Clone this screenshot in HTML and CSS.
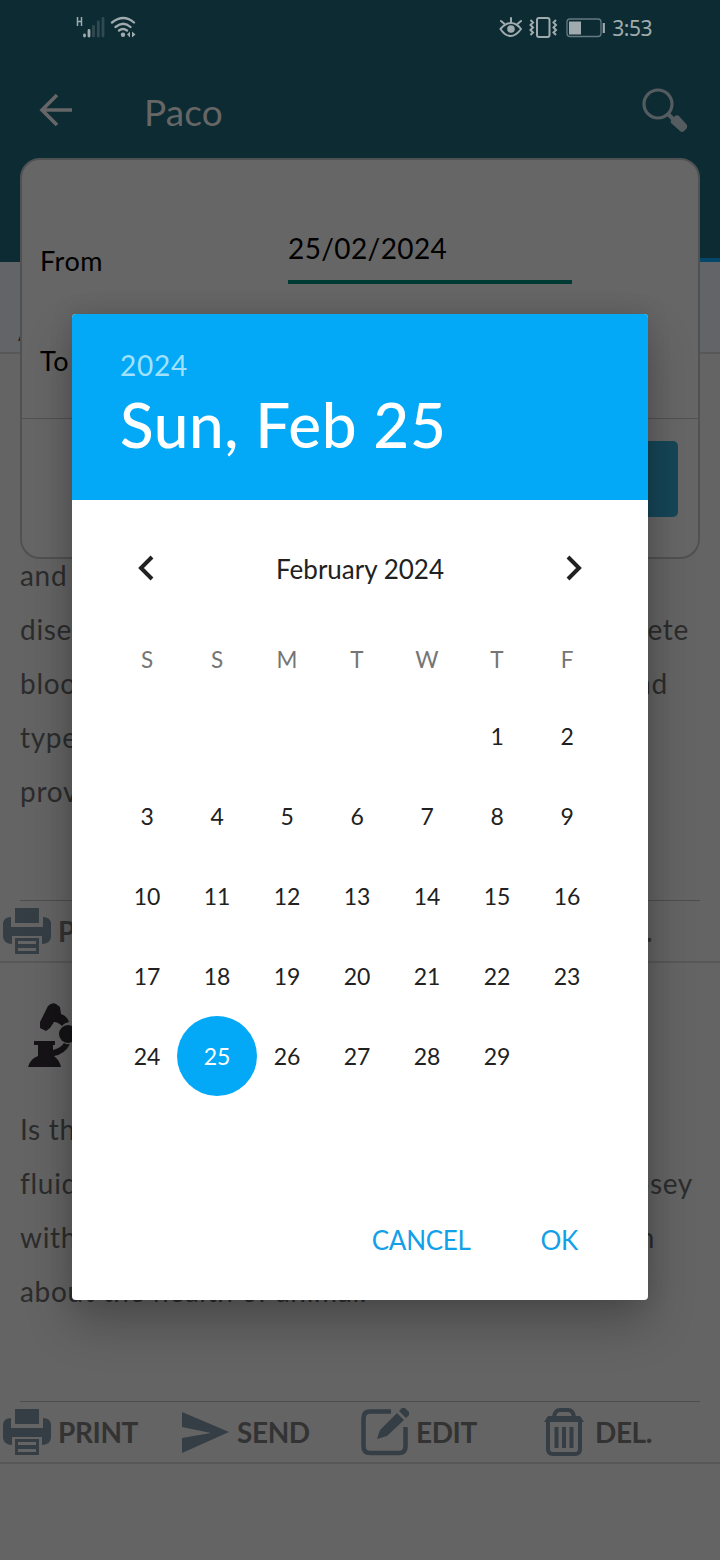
FILE: index.html
```html
<!DOCTYPE html>
<html lang="en">
<head>
    <meta charset="UTF-8">
    <meta name="viewport" content="width=device-width, initial-scale=1.0">
    <title>Paco</title>
    <link rel="stylesheet" href="styles.css">
</head>
<body>
    <!-- shared icons -->
    <svg class="sprite" width="0" height="0">
        <symbol id="print" viewBox="0 0 48 48">
            <path d="M12 1h24v15H12zM0 16q1-6 8-6v10h32V10q7 0 8 6v14q-1 7-9 7v-8H9v8q-8 0-9-7z"/>
            <path fill-rule="evenodd" d="M12 31h24v16H12zM15 34v3h18v-3zM15 41v3h18v-3z"/>
        </symbol>
        <symbol id="send" viewBox="0 0 48 48">
            <path d="M0 4l47 20L0 45V30l29-5L0 19z"/>
        </symbol>
        <symbol id="edit" viewBox="0 0 48 48">
            <path d="M30 3.500H9q-6.500 0-6.500 7v28q0 6.500 6.500 6.500h29q6.500 0 6.500-6.500V19" fill="none" stroke="currentColor" stroke-width="4.500"/>
            <path d="M16 31l3-9L36 5l7 7-17 16zM38 3l3-3h3l4 4v3l-3 3z"/>
        </symbol>
        <symbol id="trash" viewBox="0 0 48 48">
            <path d="M14 9q1-7 6-7h8q5 0 6 7M8 13v28q0 5 5 5h22q5 0 5-5V13" fill="none" stroke="currentColor" stroke-width="4"/>
            <path d="M8 8h32l4 6H4z"/>
            <path d="M16.500 19v21M24 19v21M31.500 19v21" fill="none" stroke="currentColor" stroke-width="4"/>
        </symbol>
    </svg>

    <div class="screen">
        <header class="app-header">
            <div class="status-bar">
                <div class="status-left">
                    <svg width="60" height="24" viewBox="0 0 60 24">
                        <path d="M1.500 1v9M5.500 1v9M1.500 5.500h4" stroke="#9fabae" stroke-width="1.500" fill="none"/>
                        <g stroke-width="2.800" stroke-linecap="round">
                            <path d="M8.500 19v1M13 14.500v5.500" stroke="#9fabae"/>
                            <path d="M17.500 10.500v9.500M22.300 6v14M27 2.500v17.500" stroke="#314a51"/>
                        </g>
                        <g fill="none" stroke="#9fabae" stroke-width="2.300" stroke-linecap="round">
                            <path d="M36 6.500q11.500-9 22 0M39.500 11q8-6.500 15 0M43 14.500q4-3 8 0"/>
                        </g>
                        <circle cx="47" cy="18.800" r="2.200" fill="#9fabae"/>
                        <path d="M51 18.500l3-3v6zM59.500 18.500l-3.500-3v6z" fill="#9fabae"/>
                    </svg>
                </div>
                <div class="status-right">
                    <svg width="106" height="24" viewBox="0 0 106 24" fill="none" stroke="#9fabae" stroke-width="2">
                        <path d="M1.500 13q5-6 10.500-6t10 6q-5 7-10.500 7T1.500 13zM12 6V2M5 7.500L2 5M19 7.500L22 5" stroke-linecap="round"/>
                        <circle cx="12" cy="13" r="3.800" fill="#9fabae" stroke="none"/>
                        <rect x="38" y="2" width="12.500" height="19" rx="2"/>
                        <path d="M31.500 4l2.500 2.500-2.500 2.500 2.500 2.500-2.500 2.500 2.500 2.500-2.500 2.500M57 4l-2.500 2.500 2.500 2.500-2.500 2.500 2.500 2.500-2.500 2.500 2.500 2.500"/>
                        <rect x="68" y="3" width="34" height="17.500" rx="3" stroke="#657a7f" stroke-width="1.300"/>
                        <path d="M70 5.500h12v13H70z" fill="#9fabae" stroke="none"/>
                        <path d="M104.800 7v10" stroke-width="2.200"/>
                    </svg>
                    <span class="clock">3:53</span>
                </div>
            </div>
            <div class="toolbar">
                <svg class="back" width="34" height="34" viewBox="0 0 34 34" fill="none" stroke="#666" stroke-width="3.600">
                    <path d="M33 17H4M18 2L3 17l15 15"/>
                </svg>
                <h1>Paco</h1>
                <svg class="search" width="46" height="46" viewBox="0 0 46 46">
                    <circle cx="17" cy="17" r="14" fill="none" stroke="#555c60" stroke-width="3.200"/>
                    <path d="M27 27l5 5" stroke="#555c60" stroke-width="4"/>
                    <path d="M31 32l3-3q2-1.500 4 0l8 9q1 2 0 3l-3 3q-2 2-4 0l-9-8q-1-2 1-4z" fill="#555c60"/>
                </svg>
            </div>
        </header>

        <div class="tabs"><span>All</span></div>

        <article class="record first">
            <div class="text">
                <p><span>and</span></p>
                <p><span>disease</span><span class="end">complete</span></p>
                <p><span>blood</span><span class="end e2">and</span></p>
                <p><span>type</span></p>
                <p><span>provide</span></p>
            </div>
            <div class="actions">
                <div class="action"><svg><use href="#print"/></svg>PRINT</div>
                <div class="action"><svg><use href="#send"/></svg>SEND</div>
                <div class="action"><svg><use href="#edit"/></svg>EDIT</div>
                <div class="action"><svg><use href="#trash"/></svg>DEL.</div>
            </div>
        </article>

        <article class="record">
            <svg class="microscope" width="54" height="64" viewBox="0 0 54 64" fill="#151316">
                <path d="M20 3q4-4 8-2l4 3 1 7q6 2 8 8-5 1-7 4-4-4-8-4l-4 6-4 3-6-3v-6z"/>
                <circle cx="40" cy="31" r="9"/>
                <path d="M6 38h21v4h-2v5q8-2 11-7 3 2 6 1-5 10-16 12 6 5 7 11H0q2-8 10-11V42H6z"/>
            </svg>
            <div class="text">
                <p><span>Is the</span></p>
                <p><span>fluid</span><span class="end e3">Dempsey</span></p>
                <p><span>with</span><span class="end e4">in</span></p>
                <p><span>about the health of animal.</span></p>
            </div>
            <div class="actions">
                <div class="action"><svg><use href="#print"/></svg>PRINT</div>
                <div class="action"><svg><use href="#send"/></svg>SEND</div>
                <div class="action"><svg><use href="#edit"/></svg>EDIT</div>
                <div class="action"><svg><use href="#trash"/></svg>DEL.</div>
            </div>
        </article>

        <!-- date filter -->
        <section class="filter">
            <div class="field"><label>From</label><div class="input">25/02/2024</div></div>
            <div class="field to"><label>To</label></div>
            <div class="filter-footer"><div class="apply"></div></div>
        </section>

        <!-- date picker dialog -->
        <section class="picker">
            <div class="picker-header">
                <div class="year">2024</div>
                <div class="date">Sun, Feb 25</div>
            </div>
            <div class="month">
                <svg width="16" height="26" viewBox="0 0 16 26"><path d="M14 2L3 13l11 11"/></svg>
                <span>February 2024</span>
                <svg width="16" height="26" viewBox="0 0 16 26"><path d="M2 2l11 11L2 24"/></svg>
            </div>
            <div class="weekdays">
                <span>S</span><span>S</span><span>M</span><span>T</span><span>W</span><span>T</span><span>F</span>
            </div>
            <div class="days">
                <span class="day-1">1</span><span>2</span>
                <span>3</span><span>4</span><span>5</span><span>6</span><span>7</span><span>8</span><span>9</span>
                <span>10</span><span>11</span><span>12</span><span>13</span><span>14</span><span>15</span><span>16</span>
                <span>17</span><span>18</span><span>19</span><span>20</span><span>21</span><span>22</span><span>23</span>
                <span>24</span><span class="selected">25</span><span>26</span><span>27</span><span>28</span><span>29</span>
            </div>
            <div class="buttons"><span>CANCEL</span><span>OK</span></div>
        </section>
    </div>
</body>
</html>
```
FILE: styles.css
```css
* {
    box-sizing: border-box;
}
body {
    margin: 0;
    font-family: Lato, "Noto Sans", sans-serif;
}
.sprite {
    position: absolute;
}
.screen {
    position: relative;
    width: 720px;
    height: 1560px;
    overflow: hidden;
    background-color: #646464;
}
svg {
    display: block;
    flex-shrink: 0;
}

/* header */
.app-header {
    height: 262px;
    background-color: #0d2b33;
    border-bottom: 4px solid #03486b;
    border-image: linear-gradient(90deg, #0d2b33 50%, #03486b 50%) 1;
}
.status-bar {
    display: flex;
    justify-content: space-between;
    height: 56px;
    padding: 16px 68px 0 76px;
}
.status-right {
    display: flex;
    gap: 7px;
}
.clock {
    font-family: "Noto Sans", sans-serif;
    font-size: 21px;
    line-height: 24px;
    letter-spacing: -0.5px;
    color: #9fabae;
}
.toolbar {
    display: flex;
    align-items: center;
    height: 108px;
    padding: 0 33px 0 39px;
}
.toolbar h1 {
    margin: 3px auto 0 71px;
    font-size: 37px;
    font-weight: normal;
    letter-spacing: 0.1px;
    color: #666;
}
.tabs {
    height: 92px;
    padding: 51px 18px 0;
    background-color: #626468;
    border-bottom: 2px solid #585858;
    font-size: 28px;
    color: #222;
}

/* records */
.record {
    height: 501px;
    display: flex;
    flex-direction: column;
    border-bottom: 2px solid #585858;
    color: #2c2c2c;
}
.record.first {
    height: 609px;
    padding-top: 194px;
}
.microscope {
    margin: 40px 0 35px 28px;
}
.text {
    padding: 0 20px;
    font-size: 28px;
    line-height: 54px;
    letter-spacing: 0.7px;
}
.text p {
    display: flex;
    justify-content: space-between;
    margin: 0;
}
.end {
    margin-right: 11px;
}
.e2 {
    margin-right: 32px;
}
.e3 {
    margin-right: 7px;
}
.e4 {
    margin-right: 45px;
}
.actions {
    display: flex;
    height: 61px;
    margin: auto 20px 0;
    border-top: 1px solid #4d4d4d;
}
.action {
    display: flex;
    align-items: center;
    gap: 7px;
    flex: 0 0 179px;
    transform: translateX(-17px);
    font-size: 28px;
    font-weight: bold;
    letter-spacing: -0.4px;
    color: #333;
}
.action svg {
    width: 48px;
    height: 48px;
    color: #343e44;
    fill: #343e44;
}

/* filter card */
.filter {
    position: absolute;
    top: 158px;
    left: 20px;
    width: 680px;
    height: 401px;
    background-color: #666;
    border: 2px solid #505152;
    border-radius: 20px;
    font-size: 27px;
    color: #000;
}
.field {
    display: flex;
    align-items: center;
    height: 100px;
    margin-top: 50px;
    padding-left: 18px;
}
.field label {
    width: 248px;
    letter-spacing: 0.5px;
}
.input {
    width: 284px;
    height: 53px;
    margin-top: -6px;
    font-size: 28px;
    letter-spacing: 0.4px;
    border-bottom: 4px solid #003b33;
}
.field.to {
    margin-top: 0;
}
.filter-footer {
    height: 139px;
    margin-top: 8px;
    padding: 22px 20px;
    border-top: 1px solid #505152;
}
.apply {
    height: 76px;
    margin-left: 50%;
    background-color: #164658;
    border-radius: 5px;
}

/* date picker */
.picker {
    position: absolute;
    top: 314px;
    left: 72px;
    width: 576px;
    height: 986px;
    overflow: hidden;
    background-color: #fff;
    border-radius: 4px;
    box-shadow: 0 24px 48px rgba(0, 0, 0, 0.24), 0 0 24px rgba(0, 0, 0, 0.12);
    color: #212121;
}
.picker-header {
    height: 186px;
    padding: 34px 48px 0;
    background-color: #03a9f6;
    color: #fff;
}
.year {
    font-size: 28px;
    line-height: 34px;
    letter-spacing: 0.8px;
    color: #a0e2fd;
}
.date {
    font-size: 62px;
    font-weight: 500;
    line-height: 84px;
    letter-spacing: 0.6px;
}
.month {
    display: flex;
    justify-content: space-between;
    align-items: center;
    height: 80px;
    margin: 28px 66px 0;
    font-size: 26px;
}
.month span {
    padding-top: 2px;
}
.month svg {
    fill: none;
    stroke: #212121;
    stroke-width: 4;
}
.weekdays,
.days {
    display: grid;
    grid-template-columns: repeat(7, 70px);
    margin-left: 40px;
    text-align: center;
}
.weekdays {
    height: 88px;
    font-size: 22.5px;
    line-height: 103px;
    color: #757575;
}
.days {
    grid-auto-rows: 80px;
    font-size: 23px;
    line-height: 80px;
    letter-spacing: -0.2px;
}
.day-1 {
    grid-column: 6;
}
.selected {
    width: 80px;
    height: 80px;
    margin-left: -5px;
    background-color: #03a9f6;
    border-radius: 50%;
    color: #fff;
}
.buttons {
    display: flex;
    justify-content: flex-end;
    gap: 70px;
    margin-top: 128px;
    padding-right: 70px;
    font-size: 26px;
    line-height: 32px;
    letter-spacing: -0.3px;
    color: #12a0e8;
}
```
